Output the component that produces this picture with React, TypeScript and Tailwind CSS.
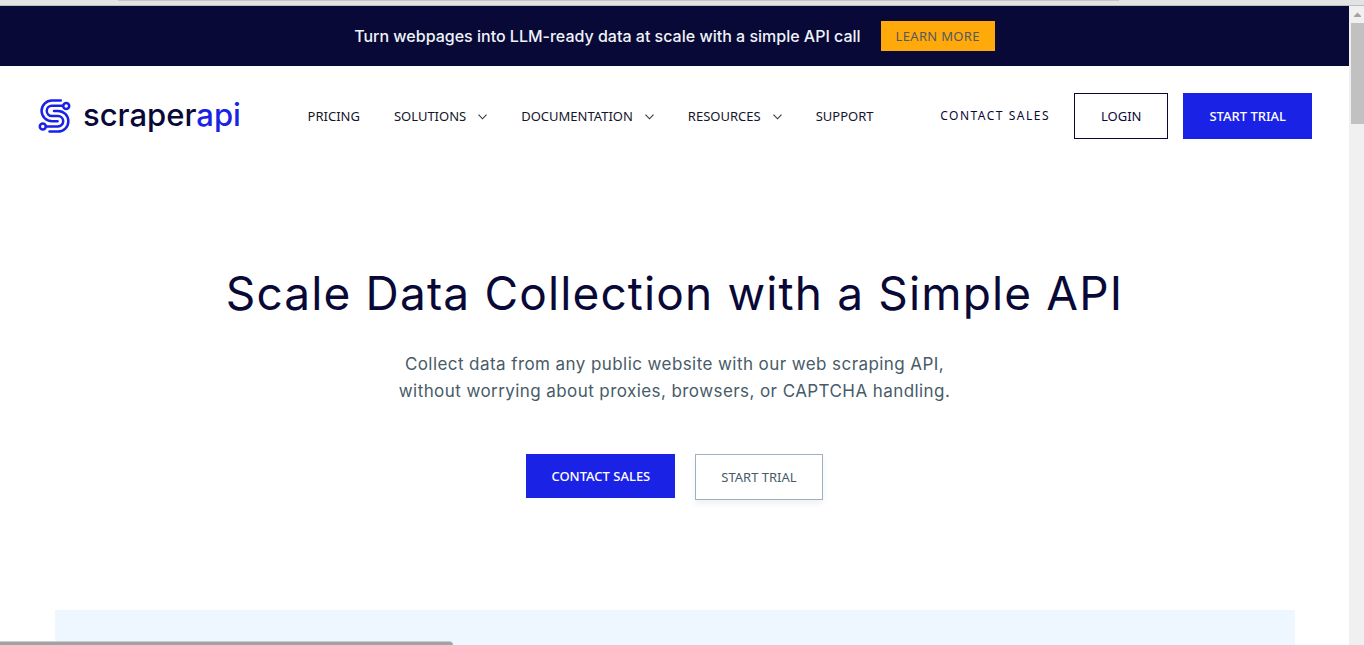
import React from "react";

const navItems = [
  { label: "PRICING", menu: false },
  { label: "SOLUTIONS", menu: true },
  { label: "DOCUMENTATION", menu: true },
  { label: "RESOURCES", menu: true },
  { label: "SUPPORT", menu: false },
];

function Chevron() {
  return (
    <svg width="9" height="6" viewBox="0 0 9 6" fill="none" stroke="#33333f" strokeWidth="1.1" aria-hidden="true">
      <path d="M0.5 0.7 4.5 4.8 8.5 0.7" />
    </svg>
  );
}

function LogoMark() {
  return (
    <svg width="34" height="36" viewBox="38 98 34 36" fill="none" stroke="#1a22e5" strokeWidth="2.5" strokeLinecap="round" aria-hidden="true">
      <path d="M60.8 100.5H51.9a10.35 10.35 0 0 0 0 20.7H57.6" />
      <path d="M63 105.7H51.9a5.15 5.15 0 0 0 0 10.3H58a5.2 5.2 0 0 1 0 10.4H46" />
      <path d="M54 110.9H58a10.35 10.35 0 0 1 0 20.7H49.5" />
      <circle cx="66.2" cy="105.9" r="3" />
      <circle cx="42.8" cy="126.4" r="3" />
    </svg>
  );
}

function Banner() {
  return (
    <div className="flex h-15 items-center justify-center gap-5 bg-[#090937]">
      <p className="font-['Inter',sans-serif] text-base font-medium text-[#eef3f8]">
        Turn webpages into LLM-ready data at scale with a simple API call
      </p>
      <a href="#learn" className="bg-[#ffa90a] px-[15px] py-1 text-[13px] leading-[22px] tracking-wide text-[#54595f]">
        LEARN MORE
      </a>
    </div>
  );
}

function Header() {
  return (
    <header className="flex items-center justify-between pt-[27px] pr-[37px] pl-[38px]">
      <a href="#home" className="flex items-center gap-[11px]">
        <LogoMark />
        <span className="pb-0.5 font-['Inter',sans-serif] text-[31px] leading-9 font-medium text-[#090937]">
          scraper<span className="text-[#1a22e5]">api</span>
        </span>
      </a>
      <nav className="flex items-center gap-[34px] pt-0.5 text-[13px] text-[#14142b]">
        {navItems.map((item) => (
          <a key={item.label} href={"#" + item.label.toLowerCase()} className="flex items-center gap-3">
            {item.label}
            {item.menu && <Chevron />}
          </a>
        ))}
      </nav>
      <div className="flex items-center text-[13px] text-[#090937]">
        <a href="#sales" className="mr-6 text-xs tracking-[1.5px]">CONTACT SALES</a>
        <a href="#login" className="mr-[15px] border border-[#090937] px-[26px] py-3 leading-5">LOGIN</a>
        <a href="#trial" className="bg-[#1a22e5] px-[26px] py-[13px] leading-5 font-medium text-white">START TRIAL</a>
      </div>
    </header>
  );
}

function Hero() {
  return (
    <section className="flex flex-col items-center pt-[126px] pb-[110px] text-center">
      <h1 className="font-['Inter',sans-serif] text-[46px] leading-[56px] tracking-wide text-[#090937]">
        Scale Data Collection with a Simple API
      </h1>
      <p className="mt-[30px] font-['Inter',sans-serif] text-[17px] leading-[27px] tracking-wide text-[#475b68]">
        Collect data from any public website with our web scraping API,
        <br />
        without worrying about proxies, browsers, or CAPTCHA handling.
      </p>
      <div className="mt-[49px] flex items-start gap-5 text-[13px] leading-5">
        <a href="#sales" className="bg-[#1a22e5] px-[25px] py-3 font-medium text-white">CONTACT SALES</a>
        <a href="#trial" className="border border-[#9fb1c1] px-[25px] py-3 text-[#475b68] shadow-[0_4px_6px_rgba(0,0,0,0.06)]">
          START TRIAL
        </a>
      </div>
    </section>
  );
}

function ScrollBar() {
  return (
    <div className="flex w-[15px] shrink-0 flex-col items-end bg-[#f0f0f0]" aria-hidden="true">
      <svg width="15" height="17" viewBox="0 0 15 17" fill="#a3a3a3">
        <path d="M5 11V10L8.5 6.5 12 10V11Z" />
      </svg>
      <div className="h-[101px] w-[13px] bg-[#c1c1c1]" />
    </div>
  );
}

export default function App() {
  return (
    <div className="flex min-h-screen flex-col bg-white font-['Noto_Sans',sans-serif]">
      <div className="h-[6px] border-b border-[#b9c0c0] bg-[#e3e3e3]">
        <div className="mr-[245px] ml-[118px] h-px bg-[#c6c6c6]" />
      </div>
      <div className="flex flex-1">
        <main className="flex flex-1 flex-col">
          <Banner />
          <Header />
          <Hero />
          <div className="mr-[54px] ml-[55px] flex-1 bg-[#eef6ff]" />
        </main>
        <ScrollBar />
      </div>
      <div className="fixed bottom-0 left-0 h-1 w-[453px] rounded-tr border-t border-[#c9cdd0] bg-[#a2a2a2]" />
    </div>
  );
}
